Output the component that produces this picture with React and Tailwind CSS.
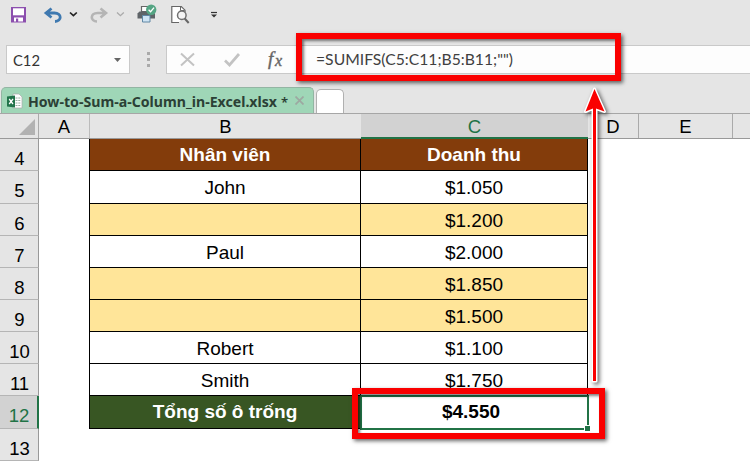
const ROWS = [
  { n: 4, h: 'h-[32px]', b: 'Nhân viên', c: 'Doanh thu', kind: 'head' },
  { n: 5, h: 'h-[33px]', b: 'John', c: '$1.050' },
  { n: 6, h: 'h-[32px]', b: '', c: '$1.200', kind: 'blank' },
  { n: 7, h: 'h-[32px]', b: 'Paul', c: '$2.000' },
  { n: 8, h: 'h-[32px]', b: '', c: '$1.850', kind: 'blank' },
  { n: 9, h: 'h-[32px]', b: '', c: '$1.500', kind: 'blank' },
  { n: 10, h: 'h-[32px]', b: 'Robert', c: '$1.100' },
  { n: 11, h: 'h-[32px]', b: 'Smith', c: '$1.750' },
  { n: 12, h: 'h-[33px]', b: 'Tổng số ô trống', c: '$4.550', kind: 'total' },
  { n: 13, h: 'h-[32px]', kind: 'none' },
];

const FILL = {
  head: 'bg-[#833c0b] text-white font-bold leading-[31px]',
  blank: 'bg-[#ffe599]',
  total: 'bg-[#385623] text-white font-bold leading-[31px]',
};

function Toolbar() {
  return (
    <svg className="block h-[45px] w-full shrink-0" viewBox="0 0 750 45" fill="none">
      {/* save */}
      <path d="M11 7h15v15.500H11z" fill="#8c4fae" />
      <path d="M13 8.300h11v7H13z" fill="#fff" />
      <path d="M14 17.500h9v4H14z" fill="#fff" />
      <path d="M16 18.500h2.200V22H16z" fill="#8c4fae" />
      {/* undo */}
      <path d="M51.500 8.500L46 13l5.500 4.500M46.500 13h8c7.500 0 7.500 8.300.500 8.500" stroke="#3f79b0" strokeWidth="2.800" />
      <path d="M70 12.500l3.400 3.200 3.400-3.200" stroke="#222" strokeWidth="1.700" />
      {/* redo */}
      <path d="M100.500 8.500L106 13l-5.500 4.500M105.500 13h-8c-7.500 0-7.500 8.300-.500 8.500" stroke="#b5b5b5" strokeWidth="2.600" />
      <path d="M117 12.500l3.400 3.200 3.400-3.200" stroke="#aaa" strokeWidth="1.300" />
      {/* quick print */}
      <path d="M141.500 6.500h8v5h-8z" fill="#fff" stroke="#666" strokeWidth="1.200" />
      <path d="M139.500 11.500h13.500l2 2v5h-17.500v-5z" fill="#5f6468" />
      <path d="M142.500 15.500h7.500v6.500h-7.500z" fill="#cfe4f4" stroke="#6088a5" />
      <circle cx="151.200" cy="9.700" r="5.200" fill="#55a584" />
      <path d="M148.600 9.700l2 2 3.400-4" stroke="#fff" strokeWidth="1.300" />
      {/* print preview */}
      <path d="M179 22.500h-7.200V6.500h9.500l3.700 3.700v2" fill="#fff" stroke="#666" strokeWidth="1.200" />
      <path d="M180.500 6.500v4h4" stroke="#666" />
      <circle cx="181.800" cy="15.300" r="4.300" fill="#f4f4f4" stroke="#707070" strokeWidth="1.500" />
      <path d="M184.700 18.500l4 4.500" stroke="#666" strokeWidth="2" />
      {/* customise */}
      <path d="M211 12.500h6" stroke="#333" strokeWidth="1.200" />
      <path d="M211 14.500h6l-3 3z" fill="#333" />
    </svg>
  );
}

function FormulaBar() {
  return (
    <div className="flex h-[29px] shrink-0 pl-[6px]">
      <div className="flex w-[124px] items-center justify-between border border-[#c9c9c9] bg-[#fdfdfd] pl-[6px] pr-[8px]">
        <svg className="h-5 w-[34px]" viewBox="0 0 34 20">
          <text x="0" y="15.500" textLength="27" lengthAdjust="spacingAndGlyphs" fontFamily="Lato, sans-serif" fontSize="16" fill="#333">C12</text>
        </svg>
        <svg className="h-1 w-[7px]" viewBox="0 0 7 4"><path d="M0 0h7L3.500 4z" fill="#666" /></svg>
      </div>
      <div className="flex w-[36px] flex-col items-center justify-center gap-[3px]">
        <i className="size-[3px] bg-[#aaa]" />
        <i className="size-[3px] bg-[#aaa]" />
        <i className="size-[3px] bg-[#aaa]" />
      </div>
      <div className="flex-1 border-y border-l border-[#c9c9c9] bg-[#fdfdfd]">
        <svg className="block h-[27px] w-[583px]" viewBox="167 46 583 27" fill="none">
          <path d="M181 53.500l13 12M194 53.500l-13 12" stroke="#c3c3c3" strokeWidth="2" />
          <path d="M225 60.500l4.500 4.500 9.500-11" stroke="#c3c3c3" strokeWidth="2.700" />
          <text x="268" y="65" fontFamily="Liberation Serif, serif" fontStyle="italic" fontSize="19" fill="#666" stroke="#666" strokeWidth=".4">f</text>
          <text x="275" y="65.500" fontFamily="Liberation Serif, serif" fontStyle="italic" fontSize="16" fill="#666" stroke="#666" strokeWidth=".4">x</text>
          <text x="316" y="65.300" textLength="197" lengthAdjust="spacingAndGlyphs" fontFamily="Lato, sans-serif" fontSize="16" fill="#404040">=SUMIFS(C5:C11;B5:B11;"")</text>
        </svg>
      </div>
    </div>
  );
}

function Tabs() {
  return (
    <div className="flex h-[40px] shrink-0 items-end gap-[2px] border-b border-[#a6a6a6] pl-px">
      <div className="flex h-[26px] w-[313px] items-center rounded-t-[5px] border border-b-0 border-[#93b5a3] bg-[#9fd6b7] pl-[5px]">
        <svg className="h-4 w-4 shrink-0" viewBox="0 0 16 16">
          <path d="M6 1h6l3 3v11H6z" fill="#fff" stroke="#aaa" strokeWidth=".7" />
          <path d="M8.500 5h5M8.500 7.500h5M8.500 10h5M8.500 12.500h5" stroke="#8aa595" strokeWidth=".9" strokeDasharray="2 .8" />
          <path d="M0 3.500L8 2.500v12L0 13.500z" fill="#21734a" />
          <path d="M2.200 6l3.800 5M6 6l-3.800 5" stroke="#fff" strokeWidth="1.300" />
        </svg>
        <svg className="h-5 w-[266px] shrink-0" viewBox="22 92 266 20">
          <text x="27" y="108" textLength="249" lengthAdjust="spacingAndGlyphs" fontFamily="Noto Sans, sans-serif" fontWeight="700" fontSize="14" fill="#2b4035">How-to-Sum-a-Column_in-Excel.xlsx</text>
          <text x="280" y="108" fontFamily="Noto Sans, sans-serif" fontWeight="600" fontSize="13" fill="#2b4035">*</text>
        </svg>
        <svg className="ml-[6px] h-[9px] w-[9px]" viewBox="0 0 9 9"><path d="M.5.5l8 8M8.500.5l-8 8" stroke="#9da8a1" strokeWidth="1.700" /></svg>
      </div>
      <div className="h-[24px] w-[28px] rounded-t-[5px] border border-b-0 border-[#b0b0b0] bg-white" />
    </div>
  );
}

function ColumnHeader() {
  return (
    <div className="flex h-[25px] shrink-0 border-b border-[#999] text-[18.500px] leading-[26px] text-black">
      <div className="flex w-[39px] items-end justify-end border-r border-[#aaa] pb-[3px] pr-[3px]">
        <svg className="h-4 w-4" viewBox="0 0 16 16"><path d="M16 0v16H0z" fill="#b2b2b2" /></svg>
      </div>
      <div className="w-[51px] border-r border-[#bbb] text-center">A</div>
      <div className="w-[271px] text-center">B</div>
      <div className="-mb-px w-[227px] border-b-2 border-[#217346] bg-[#d2d2d2] text-center text-[#217346]">C</div>
      <div className="w-[51px] border-r border-[#aaa] text-center">D</div>
      <div className="w-[94px] border-r border-[#aaa] text-center">E</div>
    </div>
  );
}

function Row({ row }) {
  const total = row.kind === 'total';
  return (
    <div className={`flex shrink-0 text-[19px] leading-[33px] text-black ${row.h}`}>
      <div className={`w-[39px] border-b border-[#b5b5b5] pl-px pt-[3px] text-center text-[18.500px] ${total ? 'border-r-2 border-r-[#217346] bg-[#d2d2d2] text-[#217346]' : 'border-r border-r-[#999] bg-[#e5e5e5]'}`}>{row.n}</div>
      <div className="w-[50px]" />
      {row.kind !== 'none' && (
        <>
          <div className={`w-[272px] border-x border-b border-black text-center ${FILL[row.kind] ?? ''}`}>{row.b}</div>
          <div className={`w-[227px] border-r border-b border-black text-center ${total ? 'pr-[6px] font-bold leading-[31px]' : FILL[row.kind] ?? ''}`}>{row.c}</div>
        </>
      )}
    </div>
  );
}

export default function App() {
  return (
    <div className="relative flex h-[462px] w-[750px] flex-col overflow-hidden bg-[#e5e5e5] font-['Liberation_Sans',Arial,sans-serif]">
      <Toolbar />
      <FormulaBar />
      <Tabs />
      <ColumnHeader />
      <div className="flex flex-1 flex-col bg-white">
        {ROWS.map((row) => <Row key={row.n} row={row} />)}
      </div>

      {/* selected cell and callouts */}
      <div className="absolute left-[360px] top-[395px] h-[35px] w-[229px] border-2 border-[#217346]">
        <div className="absolute -bottom-[3px] -right-[3px] size-[6px] border-l border-t border-white bg-[#217346]" />
      </div>
      <div className="absolute left-[296px] top-[33px] h-[48px] w-[325px] border-[6px] border-[#fa0000] shadow-[2px_2px_4px_rgba(0,0,0,0.6),inset_2px_2px_3px_rgba(0,0,0,0.5)]" />
      <div className="absolute left-[352px] top-[388px] h-[51px] w-[253px] border-[6px] border-[#fa0000] shadow-[2px_2px_4px_rgba(0,0,0,0.6),inset_2px_2px_3px_rgba(0,0,0,0.5)]" />
      <svg className="absolute left-[575px] top-[82px] h-[310px] w-[40px] drop-shadow-[2px_2px_2px_rgba(0,0,0,0.6)]" viewBox="575 82 40 310">
        <path d="M594.500 89l-9 22.500 7.500-3V381h3V108.500l8.500 3z" fill="#fa0000" stroke="#fff" strokeWidth="3" strokeLinejoin="round" paintOrder="stroke" />
      </svg>
    </div>
  );
}
